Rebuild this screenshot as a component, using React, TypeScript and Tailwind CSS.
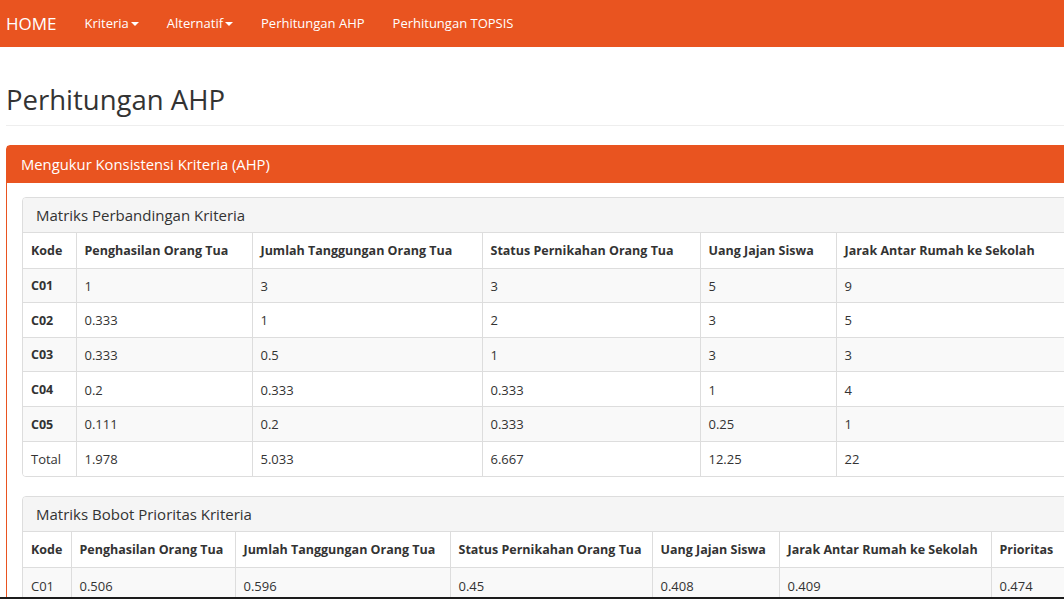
import React from "react";

const font = { fontFamily: '"Open Sans", "Noto Sans", sans-serif' };

const t1Cols = [53, 176, 230, 218, 136, 247];
const t1Head = ["Kode", "Penghasilan Orang Tua", "Jumlah Tanggungan Orang Tua", "Status Pernikahan Orang Tua", "Uang Jajan Siswa", "Jarak Antar Rumah ke Sekolah"];
const t1Rows = [
  ["C01", "1", "3", "3", "5", "9"],
  ["C02", "0.333", "1", "2", "3", "5"],
  ["C03", "0.333", "0.5", "1", "3", "3"],
  ["C04", "0.2", "0.333", "0.333", "1", "4"],
  ["C05", "0.111", "0.2", "0.333", "0.25", "1"],
];
const t1Total = ["Total", "1.978", "5.033", "6.667", "12.25", "22"];

const t2Cols = [48, 164, 215, 202, 127, 212, 92];
const t2Head = ["Kode", "Penghasilan Orang Tua", "Jumlah Tanggungan Orang Tua", "Status Pernikahan Orang Tua", "Uang Jajan Siswa", "Jarak Antar Rumah ke Sekolah", "Prioritas"];
const t2Rows = [["C01", "0.506", "0.596", "0.45", "0.408", "0.409", "0.474"]];

function Caret() {
  return <span className="inline-block ml-[2px] align-middle w-0 h-0 border-l-[4px] border-r-[4px] border-t-[4px] border-l-transparent border-r-transparent border-t-white" />;
}

function Navbar() {
  return (
    <div className="h-[47px] bg-[#e95420] flex items-center text-white">
      <span className="pl-[6px] pr-[14px] text-[17px] leading-[20px] text-white">HOME</span>
      <span className="px-[14px] text-[13px] flex items-center">Kriteria<Caret /></span>
      <span className="px-[14px] text-[13px] flex items-center">Alternatif<Caret /></span>
      <span className="px-[14px] text-[13px]">Perhitungan AHP</span>
      <span className="px-[14px] text-[13px]">Perhitungan TOPSIS</span>
    </div>
  );
}

function Table({ cols, head, rows, total, headH }: { cols: number[]; head: string[]; rows: string[][]; total?: string[]; headH: string }) {
  return (
    <table className="table-fixed border-collapse w-full text-[13px] text-[#333]">
      <colgroup>
        {cols.map((w, i) => (
          <col key={i} style={{ width: w }} />
        ))}
      </colgroup>
      <thead>
        <tr className={`${headH} bg-white`}>
          {head.map((h, i) => (
            <th key={i} className={`text-left font-bold text-[12.5px] px-[8px] pt-[2px] pb-0 whitespace-nowrap border-[#ddd] ${i > 0 ? "border-l" : ""}`}>
              {h}
            </th>
          ))}
        </tr>
      </thead>
      <tbody>
        {rows.map((r, ri) => (
          <tr key={ri} className={`h-[34.67px] border-t border-[#ddd] ${ri % 2 === 0 ? "bg-[#f9f9f9]" : "bg-white"}`}>
            {r.map((c, ci) => (
              <td key={ci} className={`px-[8px] pt-[2px] pb-0 whitespace-nowrap border-[#ddd] ${ci > 0 ? "border-l" : ""} ${ci === 0 && total ? "font-bold text-[12.5px]" : ""}`}>
                {c}
              </td>
            ))}
          </tr>
        ))}
        {total && (
          <tr className="h-[34.67px] border-t border-[#ddd] bg-white">
            {total.map((c, ci) => (
              <td key={ci} className={`px-[8px] pt-[2px] pb-0 whitespace-nowrap border-[#ddd] ${ci > 0 ? "border-l" : ""}`}>
                {c}
              </td>
            ))}
          </tr>
        )}
      </tbody>
    </table>
  );
}

function InnerPanel({ title, children }: { title: string; children: React.ReactNode }) {
  return (
    <div className="border border-[#ddd] rounded-[4px] mb-[19px] overflow-hidden bg-white">
      <div className="h-[35px] bg-[#f5f5f5] border-b border-[#ddd] px-[13px] flex items-center text-[15px] text-[#333]">{title}</div>
      {children}
    </div>
  );
}

export default function App() {
  return (
    <div className="w-[1064px] h-[599px] overflow-hidden bg-white relative" style={font}>
      <Navbar />
      <div className="w-[1110px] px-[6px]">
        <div className="mt-[37px] pb-[9px] border-b border-[#eee] mb-[19px]">
          <h1 className="text-[27.5px] leading-[32px] text-[#333] font-normal">Perhitungan AHP</h1>
        </div>
        <div className="border border-[#e95420] rounded-[4px] w-[1092px]">
          <div className="h-[37px] bg-[#e95420] text-white text-[14.8px] px-[14px] flex items-center">Mengukur Konsistensi Kriteria (AHP)</div>
          <div className="px-[15px] pt-[14px]">
            <InnerPanel title="Matriks Perbandingan Kriteria">
              <Table cols={t1Cols} head={t1Head} rows={t1Rows} total={t1Total} headH="h-[35px]" />
            </InnerPanel>
            <InnerPanel title="Matriks Bobot Prioritas Kriteria">
              <Table cols={t2Cols} head={t2Head} rows={t2Rows} headH="h-[36px]" />
            </InnerPanel>
          </div>
        </div>
      </div>
      <div className="absolute left-0 right-0 bottom-0 h-[2px] bg-[#1c1c1c]" />
    </div>
  );
}
